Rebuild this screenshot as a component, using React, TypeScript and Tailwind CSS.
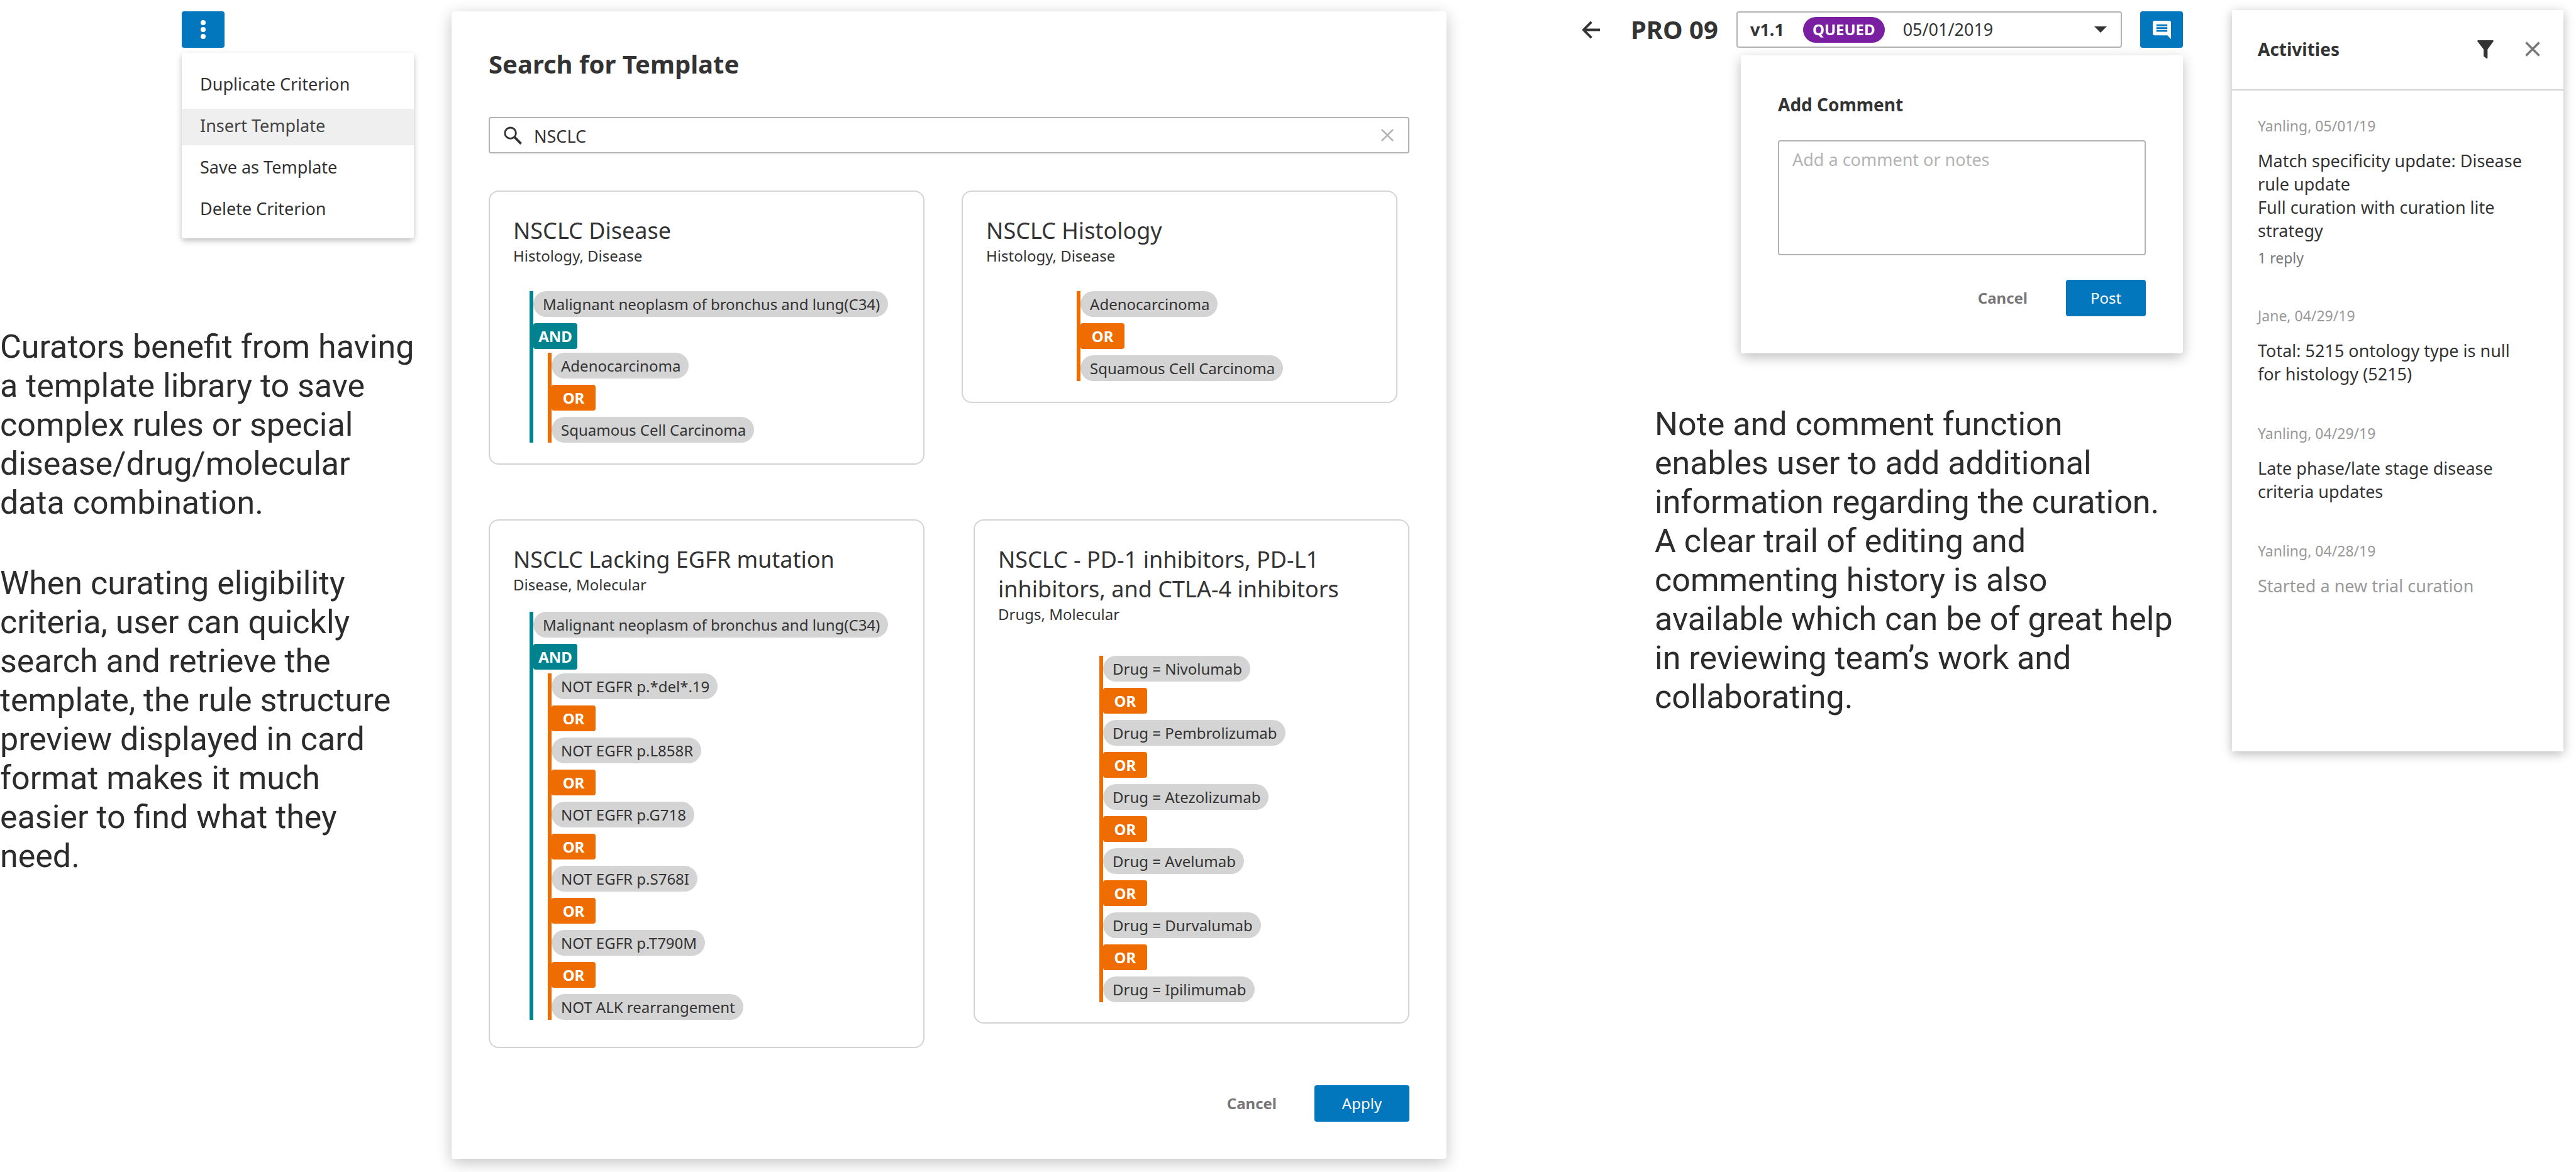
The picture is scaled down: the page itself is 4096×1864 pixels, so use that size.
import React from "react";
import type { ReactNode } from "react";

function Chip({ children }: { children: ReactNode }) {
  return (
    <li className="flex h-[41px] items-center self-start rounded-full bg-[#d4d4d4] pr-[13px] pl-[15px] text-[24px] whitespace-nowrap">
      {children}
    </li>
  );
}

function Operator({ kind }: { kind: "AND" | "OR" }) {
  return (
    <li
      className={`flex h-[41px] w-[70px] items-center justify-center self-start rounded text-[24px] font-bold text-white ${
        kind === "AND" ? "bg-[#00838f]" : "bg-[#ef6c00]"
      }`}
    >
      {kind}
    </li>
  );
}

function OrGroup({ items }: { items: string[] }) {
  return (
    <ul className="flex flex-col gap-[10px] border-l-6 border-[#ef6c00]">
      {items.map((item, i) => (
        <React.Fragment key={item}>
          {i > 0 && <Operator kind="OR" />}
          <Chip>{item}</Chip>
        </React.Fragment>
      ))}
    </ul>
  );
}

function AndGroup({ first, items }: { first: string; items: string[] }) {
  return (
    <ul className="flex flex-col border-l-6 border-[#00838f]">
      <Chip>{first}</Chip>
      <li className="h-[10px]" aria-hidden="true" />
      <Operator kind="AND" />
      <li className="mt-[6px] ml-[23px]">
        <OrGroup items={items} />
      </li>
    </ul>
  );
}

function Card({ title, tags, className, children }: { title: string; tags: string; className: string; children: ReactNode }) {
  return (
    <article className={`w-[47.34%] rounded-2xl border-2 border-[#d4d4d4] px-[37px] pt-[38px] ${className}`}>
      <h3 className="text-[36px] leading-[47px]">{title}</h3>
      <p className="text-[24px] leading-[34px]">{tags}</p>
      {children}
    </article>
  );
}

const menuItems = ["Duplicate Criterion", "Insert Template", "Save as Template", "Delete Criterion"];

function CriterionMenu() {
  return (
    <section className="flex flex-col pt-[18px] pr-[60px]">
      <div className="ml-[289px] flex flex-col items-start gap-2">
        <button aria-label="More actions" className="flex h-[58px] w-[68px] items-center justify-center rounded bg-[#0277bd]">
          <svg viewBox="0 0 8 30" className="h-[30px] w-2" fill="#fff">
            <circle cx="4" cy="4" r="4" />
            <circle cx="4" cy="15" r="4" />
            <circle cx="4" cy="26" r="4" />
          </svg>
        </button>
        <div role="menu" className="flex w-full flex-col gap-2 rounded bg-white pt-[23px] pb-4 shadow-[0_4px_10px_rgba(0,0,0,0.25)]">
          {menuItems.map((item) => (
            <button
              key={item}
              role="menuitem"
              className={`h-[58px] pb-1 pl-[29px] text-left text-[27px] ${item === "Insert Template" ? "bg-[#efefef] text-[#444]" : ""}`}
            >
              {item}
            </button>
          ))}
        </div>
      </div>
      <div className="mt-[142px] flex flex-col gap-[66px] font-[Roboto,sans-serif] text-[52px] leading-[62px] text-[#2c2c2c]">
        <p className="-mr-3">
          Curators benefit from having a template library to save complex rules or special disease/drug/molecular data combination.
        </p>
        <p>
          When curating eligibility criteria, user can quickly search and retrieve the template, the rule structure preview displayed in
          card format makes it much easier to find what they need.
        </p>
      </div>
    </section>
  );
}

function TemplateDialog() {
  return (
    <section className="mt-[18px] flex flex-col self-start rounded bg-white p-[59px] pt-[58px] shadow-[0_6px_24px_rgba(0,0,0,0.24)]">
      <h2 className="text-[40px] leading-[52px] font-bold">Search for Template</h2>
      <label className="mt-[58px] flex h-[58px] items-center rounded border-2 border-[#b3b3b3] pr-[23px] pl-[22px]">
        <svg viewBox="0 0 30 30" className="size-[29px]" fill="none" stroke="#333" strokeWidth="3">
          <circle cx="11" cy="11" r="9" />
          <path d="M17.5 17.5 28.5 28.5" strokeWidth="4" />
        </svg>
        <input aria-label="Search templates" defaultValue="NSCLC" className="ml-[19px] min-w-0 flex-1 pt-1 text-[27px] outline-none" />
        <button aria-label="Clear search">
          <svg viewBox="0 0 20 20" className="size-5" fill="none" stroke="#b3b3b3" strokeWidth="2.5">
            <path d="M1 1 19 19M19 1 1 19" />
          </svg>
        </button>
      </label>
      <div className="mt-[59px] flex items-start gap-[59px]">
        <Card title="NSCLC Disease" tags="Histology, Disease" className="pb-[33px]">
          <div className="mt-[39px] ml-[26px]">
            <AndGroup first="Malignant neoplasm of bronchus and lung(C34)" items={["Adenocarcinoma", "Squamous Cell Carcinoma"]} />
          </div>
        </Card>
        <Card title="NSCLC Histology" tags="Histology, Disease" className="pb-[33px]">
          <div className="mt-[39px] ml-[144px]">
            <OrGroup items={["Adenocarcinoma", "Squamous Cell Carcinoma"]} />
          </div>
        </Card>
      </div>
      <div className="mt-[87px] flex items-start justify-between">
        <Card title="NSCLC Lacking EGFR mutation" tags="Disease, Molecular" className="pb-[43px]">
          <div className="mt-[26px] ml-[26px]">
            <AndGroup
              first="Malignant neoplasm of bronchus and lung(C34)"
              items={[
                "NOT EGFR p.*del*.19",
                "NOT EGFR p.L858R",
                "NOT EGFR p.G718",
                "NOT EGFR p.S768I",
                "NOT EGFR p.T790M",
                "NOT ALK rearrangement",
              ]}
            />
          </div>
        </Card>
        <Card title="NSCLC - PD-1 inhibitors, PD-L1 inhibitors, and CTLA-4 inhibitors" tags="Drugs, Molecular" className="pb-[32px]">
          <div className="mt-[49px] ml-[161px]">
            <OrGroup
              items={[
                "Drug = Nivolumab",
                "Drug = Pembrolizumab",
                "Drug = Atezolizumab",
                "Drug = Avelumab",
                "Drug = Durvalumab",
                "Drug = Ipilimumab",
              ]}
            />
          </div>
        </Card>
      </div>
      <div className="mt-[59px] flex h-[58px] justify-end gap-[60px] text-[24px]">
        <button className="font-bold text-[#777]">Cancel</button>
        <button className="w-[151px] rounded bg-[#0277bd] text-white">Apply</button>
      </div>
    </section>
  );
}

function CommentColumn() {
  return (
    <section className="flex flex-col pt-[18px] pl-[215px]">
      <header className="flex h-[58px] items-center">
        <button aria-label="Back">
          <svg viewBox="0 0 30 30" className="size-[29px]" fill="none" stroke="#333" strokeWidth="4" strokeLinejoin="round">
            <path d="M30 15H3M16 2 3 15 16 28" />
          </svg>
        </button>
        <h1 className="ml-[49px] w-[168px] text-[40px] font-bold whitespace-nowrap">PRO 09</h1>
        <button
          aria-haspopup="listbox"
          className="flex h-full min-w-0 flex-1 items-center rounded border-2 border-[#b3b3b3] pr-[22px] pl-[20px] text-[27px]"
        >
          <span className="font-bold">v1.1</span>
          <span className="ml-[30px] flex h-[41px] items-center rounded-full bg-[#7b1fa2] px-[15px] text-[24px] font-bold text-white">
            QUEUED
          </span>
          <span className="ml-[29px]">05/01/2019</span>
          <svg viewBox="0 0 20 10" className="ml-auto h-[10px] w-5" fill="#333">
            <path d="M0 0H20L10 10Z" />
          </svg>
        </button>
        <button aria-label="Comments" className="ml-[29px] flex h-full w-[68px] items-center justify-center rounded bg-[#0277bd]">
          <svg viewBox="2 2 20 20" className="size-[29px]" fill="#fff">
            <path d="M20 2H4c-1.1 0-2 .9-2 2v12c0 1.1.9 2 2 2h14l4 4V4c0-1.1-.9-2-2-2zm-2 12H6v-2h12v2zm0-3H6V9h12v2zm0-3H6V6h12v2z" />
          </svg>
        </button>
      </header>
      <form className="mt-3 ml-[253px] flex flex-col rounded bg-white px-[59px] py-[59px] shadow-[0_6px_20px_rgba(0,0,0,0.26)]">
        <label htmlFor="comment" className="text-[28px] leading-[38px] font-bold">
          Add Comment
        </label>
        <textarea
          id="comment"
          placeholder="Add a comment or notes"
          className="mt-[38px] h-[183px] resize-none rounded border-2 border-[#b3b3b3] px-[21px] py-[10px] text-[27px] leading-[38px] placeholder:text-[#b3b3b3]"
        />
        <div className="mt-[39px] flex h-[58px] justify-end gap-[61px] text-[24px]">
          <button type="button" className="font-bold text-[#777]">
            Cancel
          </button>
          <button type="button" className="w-[127px] rounded bg-[#0277bd] text-white">
            Post
          </button>
        </div>
      </form>
      <p className="mt-[82px] ml-[116px] pr-3 font-[Roboto,sans-serif] text-[52px] leading-[62px] text-[#2c2c2c]">
        Note and comment function enables user to add additional information regarding the curation. A clear trail of editing and commenting
        history is also available which can be of great help in reviewing team’s work and collaborating.
      </p>
    </section>
  );
}

const activities = [
  {
    by: "Yanling, 05/01/19",
    lines: ["Match specificity update: Disease rule update", "Full curation with curation lite strategy"],
    replies: "1 reply",
  },
  { by: "Jane, 04/29/19", lines: ["Total: 5215 ontology type is null for histology (5215)"] },
  { by: "Yanling, 04/29/19", lines: ["Late phase/late stage disease criteria updates"] },
  { by: "Yanling, 04/28/19", lines: ["Started a new trial curation"], muted: true },
];

function Activities() {
  return (
    <section className="pt-4 pr-5 pl-[78px]">
      <div className="bg-white pb-[245px] shadow-[0_4px_16px_rgba(0,0,0,0.28)]">
        <header className="flex h-[128px] items-center border-b-2 border-[#d4d4d4] pr-[37px] pb-[2px] pl-[41px]">
          <h2 className="flex-1 text-[28px] font-bold">Activities</h2>
          <button aria-label="Filter">
            <svg viewBox="0 0 27 30" className="h-[29px] w-[26px]" fill="#333">
              <path d="M1 0H26Q27.300 .8 26.500 2L17 15V29Q17 30.500 15.500 30L10.500 26.500V15L.5 2Q-.3 .8 1 0Z" />
            </svg>
          </button>
          <button aria-label="Close activities" className="ml-[50px]">
            <svg viewBox="0 0 24 24" className="size-6" fill="none" stroke="#777" strokeWidth="3.500">
              <path d="M1.500 1.500 22.500 22.500M22.500 1.500 1.500 22.500" />
            </svg>
          </button>
        </header>
        <ul className="flex flex-col gap-[60px] pt-[40px] pr-[60px] pl-[41px]">
          {activities.map((a) => (
            <li key={a.by}>
              <p className="text-[23px] leading-[32px] text-[#999]">{a.by}</p>
              <div className={`mt-[21px] text-[27px] leading-[37px] ${a.muted ? "text-[#999]" : ""}`}>
                {a.lines.map((l) => (
                  <p key={l}>{l}</p>
                ))}
              </div>
              {a.replies && <p className="mt-[9px] text-[23px] leading-[32px] text-[#777]">{a.replies}</p>}
            </li>
          ))}
        </ul>
      </div>
    </section>
  );
}

export default function App() {
  return (
    <main className="grid min-h-screen grid-cols-[718fr_1582fr_1171fr_625fr] items-start bg-white font-['Noto_Sans',sans-serif] text-[#333]">
      <CriterionMenu />
      <TemplateDialog />
      <CommentColumn />
      <Activities />
    </main>
  );
}
